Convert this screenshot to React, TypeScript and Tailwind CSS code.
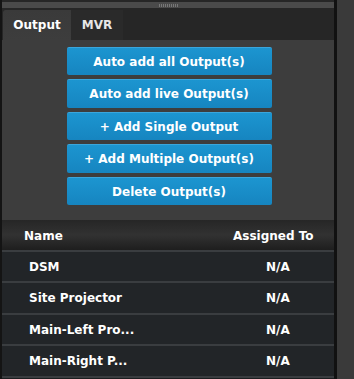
import React from "react";

const buttons = [
  "Auto add all Output(s)",
  "Auto add live Output(s)",
  "+ Add Single Output",
  "+ Add Multiple Output(s)",
  "Delete Output(s)",
];

const rows = [
  { name: "DSM", h: "h-[29px]" },
  { name: "Site Projector", h: "h-[30px]" },
  { name: "Main-Left Pro...", h: "h-[29px]" },
  { name: "Main-Right P...", h: "h-[30px]" },
];

export default function App() {
  return (
    <div
      className="flex h-[379px] w-[354px] overflow-hidden bg-[#141414] text-white"
      style={{ fontFamily: "Tahoma, 'DejaVu Sans', Verdana, sans-serif" }}
    >
      <div className="ml-[2px] flex w-[332px] flex-col">
        {/* top strip */}
        <div className="flex h-[9px] flex-col bg-[#262626] pt-[2px]">
          <div className="relative h-[6px] w-full bg-[#4a4a4a]">
            <div className="absolute left-[157px] top-[2px] flex h-[3px] gap-[1px]">
              {Array.from({ length: 10 }).map((_, i) => (
                <div key={i} className="h-[3px] w-[1px] bg-[#777]" />
              ))}
            </div>
          </div>
        </div>
        {/* tab bar */}
        <div className="flex h-[31px] items-end bg-[#262626] pl-[1px]">
          <div className="flex h-[30px] w-[68px] items-center justify-center rounded-tl-[3px] bg-gradient-to-b from-[#3a3a3a] to-[#3d3d3d] text-[12px] font-bold text-white">
            Output
          </div>
          <div className="flex h-[30px] w-[52px] items-center justify-center bg-[#2a2a2a] text-[12px] font-bold text-[#e6e6e6]">
            MVR
          </div>
        </div>
        {/* content */}
        <div className="flex h-[180px] flex-col items-center gap-[4px] bg-[#3d3d3d] pt-[7px] pl-[2px]">
          {buttons.map((b, i) => (
            <div
              key={b}
              className={`flex ${i % 2 === 0 ? "h-[28px]" : "h-[29px]"} w-[205px] items-center justify-center rounded-[2px] border-t border-[#3aa6dc] bg-gradient-to-b from-[#1c95d0] to-[#1685c0] text-[12px] font-bold text-white`}
            >
              {b}
            </div>
          ))}
        </div>
        {/* table header */}
        <div className="flex h-[30px] items-center bg-gradient-to-b from-[#262626] via-[#323232] to-[#1e1e1e] pt-[2px] text-[12px] font-bold">
          <div className="w-[210px] pl-[22px]">Name</div>
          <div className="flex-1 pl-[21px]">Assigned To</div>
        </div>
        <div className="flex flex-col">
          {rows.map((r) => (
            <div key={r.name} className="flex flex-col">
              <div className="h-[2px] bg-[#3a3d40]" />
              <div className={`flex ${r.h} items-center bg-[#222528] text-[12px] font-bold`}>
                <div className="w-[210px] pl-[27px]">{r.name}</div>
                <div className="flex-1 pl-[54px]">N/A</div>
              </div>
            </div>
          ))}
          <div className="h-[2px] bg-[#3a3d40]" />
        </div>
        <div className="flex-1 bg-[#1c1e20]" />
      </div>
      <div className="w-[3px] bg-[#111]" />
      <div className="flex-1 bg-[#3a3a3a]" />
    </div>
  );
}
